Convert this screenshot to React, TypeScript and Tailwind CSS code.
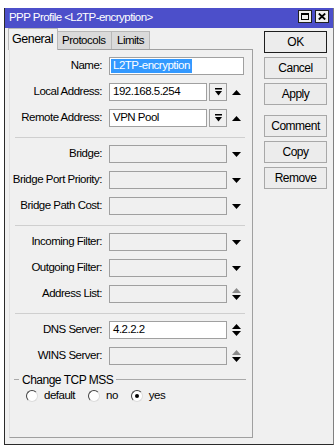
import React from "react";

const Down = () => (
  <svg width="9" height="5" viewBox="0 0 9 5" className="block">
    <path d="M0 0H9L4.5 5Z" fill="#000" />
  </svg>
);

const Up = () => (
  <svg width="9" height="5" viewBox="0 0 9 5" className="block">
    <path d="M0 5H9L4.5 0Z" fill="#000" />
  </svg>
);

const UpDown = ({ topGray }: { topGray?: boolean }) => (
  <svg width="9" height="12" viewBox="0 0 9 12" className="block">
    <path d="M0 5H9L4.5 0Z" fill={topGray ? "#8a8a8a" : "#000"} />
    <path d="M0 7H9L4.5 12Z" fill="#000" />
  </svg>
);

const DropBtn = () => (
  <div className="ml-[2px] w-[18px] h-[18px] border border-[#a0a0a0] bg-[#f0f0f0] flex items-center justify-center">
    <svg width="7" height="8" viewBox="0 0 7 8" className="block">
      <rect x="0" y="0" width="7" height="1.5" fill="#000" />
      <path d="M0 3H7L3.5 7.5Z" fill="#000" />
    </svg>
  </div>
);

function Row({
  label,
  children,
  first,
}: {
  label: string;
  children: React.ReactNode;
  first?: boolean;
}) {
  return (
    <div className={`flex items-center h-[18px] ${first ? "" : "mt-[8px]"}`}>
      <div className="w-[93px] text-right pr-[1px] whitespace-nowrap">{label}</div>
      <div className="ml-[6px] flex items-center">{children}</div>
    </div>
  );
}

const Field = ({
  w,
  value,
  disabled,
}: {
  w: string;
  value?: string;
  disabled?: boolean;
}) => (
  <div
    className={`${w} h-[18px] border border-[#a0a0a0] flex items-center pl-[3px] whitespace-nowrap ${
      disabled ? "bg-[#f0f0f0]" : "bg-white"
    }`}
  >
    {value}
  </div>
);

const Sep = () => <div className="mt-[10px] mb-[7px] ml-[5px] mr-[7px] h-px bg-[#cfcfcf]" />;

const Radio = ({ checked, label, className }: { checked?: boolean; label: string; className?: string }) => (
  <div className={`flex items-center ${className ?? ""}`}>
    <div className="w-[12px] h-[12px] rounded-full bg-white border border-t-[#404040] border-l-[#404040] border-b-[#dcdcdc] border-r-[#dcdcdc] flex items-center justify-center">
      {checked && <div className="w-[4px] h-[4px] rounded-full bg-black" />}
    </div>
    <span className="ml-[6px]">{label}</span>
  </div>
);

const Btn = ({ label, isDefault, className }: { label: string; isDefault?: boolean; className?: string }) => (
  <div
    className={`h-[22px] flex items-center justify-center bg-[#ececec] border ${
      isDefault ? "border-[#1e1e1e]" : "border-[#a8a8a8]"
    } ${className ?? ""}`}
  >
    {label}
  </div>
);

export default function App() {
  return (
    <div className="w-[336px] h-[448px] bg-white overflow-hidden font-['Liberation_Sans',Arial,sans-serif] text-[11.5px] tracking-[-0.5px] text-black">
      <div className="ml-[4px] mt-[8px] w-[330px] h-[437px] border-l border-r border-b border-l-[#2a2a2a] border-b-[#2a2a2a] border-r-[#808080] bg-[#f0f0f0] flex flex-col">
        {/* title bar */}
        <div className="h-[20px] bg-[#4c4fca] flex items-center pl-[4px] pr-[4px] text-white text-[11.5px] tracking-[-0.55px]">
          <span className="flex-1 whitespace-nowrap">PPP Profile &lt;L2TP-encryption&gt;</span>
          <div className="flex items-center gap-[3px] -mt-[3px]">
            <div className="w-[14px] h-[13px] bg-[#f0f0f0] border border-[#202020] flex items-center justify-center">
              <div className="w-[8px] h-[7px] border border-black border-t-2" />
            </div>
            <div className="w-[14px] h-[13px] bg-[#f0f0f0] border border-[#202020] flex items-center justify-center">
              <svg width="8" height="7" viewBox="0 0 8 7" className="block">
                <path d="M0.8 0.5L7.2 6.5M7.2 0.5L0.8 6.5" stroke="#000" strokeWidth="1.8" />
              </svg>
            </div>
          </div>
        </div>

        {/* body */}
        <div className="flex pl-[4px]">
          <div className="w-[244px] flex flex-col">
            {/* tabs */}
            <div className="h-[21px] flex items-end -ml-px">
              <div className="relative z-10 h-[22px] -mb-px w-[50px] bg-[#f0f0f0] border-t border-l border-r border-[#b8b8b8] flex items-center pl-[3px] text-[12.5px] tracking-[-0.5px]">
                General
              </div>
              <div className="h-[18px] w-[54px] bg-[#dadada] border-t border-r border-[#b8b8b8] flex items-center pl-[4px]">
                Protocols
              </div>
              <div className="h-[18px] w-[38px] bg-[#dadada] border-t border-r border-[#b8b8b8] flex items-center pl-[5px]">
                Limits
              </div>
            </div>

            {/* panel */}
            <div className="h-[389px] border border-[#a0a0a0] border-l-[#e0e0e0] bg-[#f0f0f0] pt-[7px] flex flex-col">
              <Row label="Name:" first>
                <div className="w-[135px] h-[18px] border border-[#a0a0a0] bg-white flex items-center pl-[1px]">
                  <span className="bg-[#3399ff] text-white h-[14px] flex items-center px-[2px]">L2TP-encryption</span>
                </div>
              </Row>
              <Row label="Local Address:">
                <Field w="w-[98px]" value="192.168.5.254" />
                <DropBtn />
                <div className="ml-[5px]">
                  <Up />
                </div>
              </Row>
              <Row label="Remote Address:">
                <Field w="w-[98px]" value="VPN Pool" />
                <DropBtn />
                <div className="ml-[5px]">
                  <Up />
                </div>
              </Row>

              <Sep />

              <Row label="Bridge:" first>
                <Field w="w-[118px]" disabled />
                <div className="ml-[5px]">
                  <Down />
                </div>
              </Row>
              <Row label="Bridge Port Priority:">
                <Field w="w-[118px]" disabled />
                <div className="ml-[5px]">
                  <Down />
                </div>
              </Row>
              <Row label="Bridge Path Cost:">
                <Field w="w-[118px]" disabled />
                <div className="ml-[5px]">
                  <Down />
                </div>
              </Row>

              <Sep />

              <Row label="Incoming Filter:" first>
                <Field w="w-[118px]" disabled />
                <div className="ml-[5px]">
                  <Down />
                </div>
              </Row>
              <Row label="Outgoing Filter:">
                <Field w="w-[118px]" disabled />
                <div className="ml-[5px]">
                  <Down />
                </div>
              </Row>
              <Row label="Address List:">
                <Field w="w-[118px]" disabled />
                <div className="ml-[5px]">
                  <UpDown topGray />
                </div>
              </Row>

              <Sep />

              <Row label="DNS Server:" first>
                <Field w="w-[118px]" value="4.2.2.2" />
                <div className="ml-[5px]">
                  <UpDown />
                </div>
              </Row>
              <Row label="WINS Server:">
                <Field w="w-[118px]" disabled />
                <div className="ml-[5px]">
                  <UpDown topGray />
                </div>
              </Row>

              {/* group */}
              <div className="mt-[8px] h-[13px] flex items-center ml-[4px] mr-[6px]">
                <div className="w-[5px] h-px bg-[#a9a9a9]" />
                <span className="px-[3px] whitespace-nowrap text-[12px]">Change TCP MSS</span>
                <div className="flex-1 h-px bg-[#a9a9a9]" />
              </div>
              <div className="mt-[4px] h-[12px] flex items-center ml-[16px]">
                <Radio label="default" />
                <Radio label="no" className="ml-[13px]" />
                <Radio label="yes" checked className="ml-[13px]" />
              </div>
            </div>
          </div>

          {/* buttons */}
          <div className="ml-[11px] w-[63px] pt-[3px] flex flex-col text-[12px] tracking-[-0.5px]">
            <Btn label="OK" isDefault />
            <Btn label="Cancel" className="mt-[4px]" />
            <Btn label="Apply" className="mt-[4px]" />
            <Btn label="Comment" className="mt-[10px]" />
            <Btn label="Copy" className="mt-[4px]" />
            <Btn label="Remove" className="mt-[4px]" />
          </div>
        </div>
      </div>
    </div>
  );
}
